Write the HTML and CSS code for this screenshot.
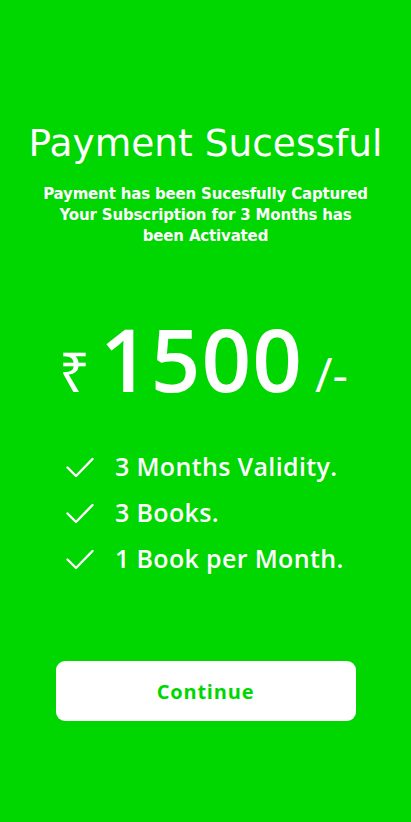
FILE: index.html
```html
<!DOCTYPE html>
<html>
<head>
<meta charset="utf-8">
<link rel="stylesheet" href="styles.css">
</head>
<body>
<main class="screen">
  <h1 class="title">Payment Sucessful</h1>
  <p class="subtitle">Payment has been Sucesfully Captured<br>Your Subscription for 3 Months has<br>been Activated</p>
  <div class="price">
    <span class="currency">₹</span>
    <span class="amount">1500</span>
    <span class="suffix">/-</span>
  </div>
  <ul class="features">
    <li class="feature">
      <svg class="check" viewBox="0 0 28 22" width="28" height="22"><path d="M1.5 11.5 L10 20 L26.5 3" fill="none" stroke="#fff" stroke-width="2.4" stroke-linecap="round" stroke-linejoin="round"/></svg>
      <span>3 Months Validity.</span>
    </li>
    <li class="feature">
      <svg class="check" viewBox="0 0 28 22" width="28" height="22"><path d="M1.5 11.5 L10 20 L26.5 3" fill="none" stroke="#fff" stroke-width="2.4" stroke-linecap="round" stroke-linejoin="round"/></svg>
      <span>3 Books.</span>
    </li>
    <li class="feature">
      <svg class="check" viewBox="0 0 28 22" width="28" height="22"><path d="M1.5 11.5 L10 20 L26.5 3" fill="none" stroke="#fff" stroke-width="2.4" stroke-linecap="round" stroke-linejoin="round"/></svg>
      <span>1 Book per Month.</span>
    </li>
  </ul>
  <button class="continue">Continue</button>
</main>
</body>
</html>
```
FILE: styles.css
```css
html, body {
  margin: 0;
  padding: 0;
  background: #00d600;
}
body {
  width: 411px;
  height: 822px;
  overflow: hidden;
  font-family: "Open Sans", "Noto Sans", sans-serif;
  color: #fff;
}
.screen {
  display: flex;
  flex-direction: column;
  align-items: center;
  padding-top: 120px;
}
.title {
  margin: 0;
  font-family: "DejaVu Sans", sans-serif;
  font-weight: 400;
  font-size: 37.5px;
  line-height: 46px;
}
.subtitle {
  margin: 18px 0 0;
  text-align: center;
  font-family: "DejaVu Sans", sans-serif;
  font-weight: 700;
  font-size: 15px;
  letter-spacing: -0.17px;
  line-height: 21px;
}
.price {
  display: flex;
  align-items: baseline;
  margin-top: 68px;
  margin-right: 4px;
  line-height: 1;
}
.currency {
  font-family: "Noto Sans", sans-serif;
  font-size: 54px;
  font-weight: 400;
  margin-right: 10px;
}
.amount {
  font-size: 87px;
  font-weight: 600;
  letter-spacing: 1px;
}
.suffix {
  font-size: 48px;
  font-weight: 400;
  margin-left: 12px;
}
.features {
  list-style: none;
  margin: 48px 0 0;
  padding: 0 0 0 66px;
  align-self: stretch;
  display: flex;
  flex-direction: column;
  gap: 13px;
}
.feature {
  display: flex;
  align-items: center;
  gap: 21px;
  font-size: 25px;
  font-weight: 600;
  letter-spacing: 0.35px;
  line-height: 33px;
}
.check {
  flex: none;
}
.continue {
  margin-top: 86px;
  width: 300px;
  height: 60px;
  border: none;
  border-radius: 9px;
  background: #fff;
  color: #00d600;
  font-family: "Open Sans", sans-serif;
  font-weight: 700;
  font-size: 20px;
  letter-spacing: 0.8px;
}
```
